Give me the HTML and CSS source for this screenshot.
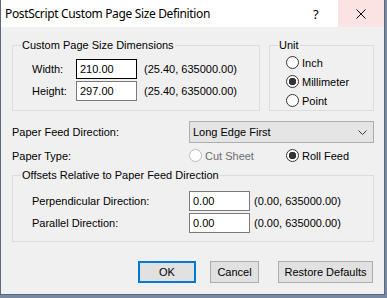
FILE: index.html
```html
<!DOCTYPE html>
<html lang="en">
<head>
  <meta charset="UTF-8" />
  <title>PostScript Custom Page Size Definition</title>
  <link rel="stylesheet" href="styles.css">
</head>
<body>
  <div class="window">
    <div class="titlebar">
      <span class="title">PostScript Custom Page Size Definition</span>
      <span class="help">?</span>
      <span class="close">
        <svg width="10" height="10" viewBox="0 0 10 10">
          <path d="M0.5 0.5 L9.5 9.5 M9.5 0.5 L0.5 9.5" stroke="#000" stroke-width="1" fill="none" />
        </svg>
      </span>
    </div>

    <div class="content">
      <div class="top-row">
        <div class="group dims">
          <div class="group-title">Custom Page Size Dimensions</div>
          <div class="field-row">
            <label class="dim-label">Width:</label>
            <input class="text-input focused" type="text" value="210.00">
            <span class="range">(25.40, 635000.00)</span>
          </div>
          <div class="field-row">
            <label class="dim-label">Height:</label>
            <input class="text-input" type="text" value="297.00">
            <span class="range">(25.40, 635000.00)</span>
          </div>
        </div>

        <div class="group unit">
          <div class="group-title">Unit</div>
          <label class="radio-row"><input type="radio" name="unit"> Inch</label>
          <label class="radio-row"><input type="radio" name="unit" checked> Millimeter</label>
          <label class="radio-row"><input type="radio" name="unit"> Point</label>
        </div>
      </div>

      <div class="form-row feed-row">
        <span class="row-label">Paper Feed Direction:</span>
        <div class="combo">
          <span>Long Edge First</span>
          <svg width="9" height="5" viewBox="0 0 9 5">
            <path d="M0.5 0.5 L4.5 4.5 L8.5 0.5" stroke="#333" stroke-width="1" fill="none" />
          </svg>
        </div>
      </div>

      <div class="form-row type-row">
        <span class="row-label">Paper Type:</span>
        <label class="radio-row cut disabled"><input type="radio" name="ptype" disabled> Cut Sheet</label>
        <label class="radio-row"><input type="radio" name="ptype" checked> Roll Feed</label>
      </div>

      <div class="group offsets">
        <div class="group-title">Offsets Relative to Paper Feed Direction</div>
        <div class="field-row">
          <label class="off-label">Perpendicular Direction:</label>
          <input class="text-input" type="text" value="0.00">
          <span class="range">(0.00, 635000.00)</span>
        </div>
        <div class="field-row">
          <label class="off-label">Parallel Direction:</label>
          <input class="text-input" type="text" value="0.00">
          <span class="range">(0.00, 635000.00)</span>
        </div>
      </div>

      <div class="buttons">
        <button class="btn default">OK</button>
        <button class="btn cancel">Cancel</button>
        <button class="btn restore">Restore Defaults</button>
      </div>
    </div>
  </div>
</body>
</html>
```

FILE: styles.css
```css
body {
  margin: 0;
  background-color: #7688a2;
  font-family: "Liberation Sans", Arial, sans-serif;
  font-size: 11px;
  color: #000;
  text-align: left;
}

.window {
  width: 383px;
  height: 294px;
  background-color: #f0f0f0;
  border: 1px solid #5c6877;
  border-top: none;
}

.titlebar {
  height: 27px;
  background-color: #fff;
  display: flex;
  align-items: center;
}

.title {
  flex: 1;
  padding-left: 4px;
  font-family: "Noto Sans", sans-serif;
  font-size: 12px;
  letter-spacing: -0.35px;
}

.help {
  width: 10px;
  margin-right: 15px;
  font-family: "Noto Sans", sans-serif;
  font-size: 13px;
}

.close {
  width: 46px;
  height: 27px;
  background-color: #fbe2e3;
  display: flex;
  align-items: center;
  justify-content: center;
}

.content {
  padding: 18px 10px 0 11px;
}

.top-row {
  display: flex;
  gap: 9px;
}

/* group box: border with its caption sitting on the top line */
.group {
  border: 1px solid #dcdcdc;
  display: flex;
  flex-direction: column;
  align-items: flex-start;
}

.group-title {
  margin: -7px 0 0 8px;
  padding: 0 1px;
  line-height: 13px;
  background-color: #f0f0f0;
}

.dims {
  width: 227px;
  padding: 0 0 9px 19px;
}

.dims .group-title,
.offsets .group-title {
  margin-left: -11px;
}

.dims .group-title {
  margin-bottom: 7px;
}

.unit {
  flex: 1;
  padding: 0 0 0 16px;
}

.unit .group-title {
  margin-left: -8px;
  margin-bottom: 1px;
}

.field-row {
  display: flex;
  align-items: center;
  height: 20px;
}

.field-row + .field-row {
  margin-top: 2px;
}

.dim-label {
  width: 44px;
}

.off-label {
  width: 157px;
}

.text-input {
  box-sizing: border-box;
  width: 61px;
  height: 20px;
  margin: 0;
  padding: 0 3px;
  border: 1px solid #7a7a7a;
  background: #fff;
  font-family: "Liberation Sans", Arial, sans-serif;
  font-size: 11px;
  color: #000;
}

.text-input.focused {
  border-color: #000;
}

.range {
  margin-left: 7px;
}

.offsets .range {
  margin-left: 4px;
}

.radio-row {
  display: flex;
  align-items: center;
  height: 19px;
}

.radio-row input {
  appearance: none;
  -webkit-appearance: none;
  box-sizing: border-box;
  width: 13px;
  height: 13px;
  margin: 0 3px 0 0;
  border: 1px solid #333;
  border-radius: 50%;
  background: #fff;
}

.radio-row input:checked {
  background: radial-gradient(circle, #333 0, #333 3.5px, #fff 4px);
}

.radio-row.disabled {
  color: #6d6d6d;
}

.radio-row.disabled input {
  border-color: #bcbcbc;
}

.form-row {
  display: flex;
  align-items: center;
}

.row-label {
  width: 177px;
}

.feed-row {
  margin-top: 10px;
  height: 22px;
}

.combo {
  flex: 1;
  box-sizing: border-box;
  height: 22px;
  display: flex;
  align-items: center;
  justify-content: space-between;
  padding: 0 6px 0 3px;
  background-color: #e5e5e5;
  border: 1px solid #adadad;
}

.type-row {
  margin-top: 4px;
  height: 17px;
}

.type-row .cut {
  width: 97px;
}

.offsets {
  margin-top: 11px;
  padding: 0 0 8px 19px;
}

.offsets .group-title {
  margin-bottom: 9px;
}

.buttons {
  display: flex;
  justify-content: flex-end;
  margin-top: 19px;
  margin-right: 1px;
}

.btn {
  box-sizing: border-box;
  height: 22px;
  padding: 0;
  background-color: #e1e1e1;
  border: 1px solid #adadad;
  font-family: "Liberation Sans", Arial, sans-serif;
  font-size: 11px;
  color: #000;
}

.btn.default {
  width: 58px;
  border: 2px solid #0078d7;
}

.btn.cancel {
  width: 49px;
  margin-left: 14px;
}

.btn.restore {
  width: 95px;
  margin-left: 19px;
}
```
